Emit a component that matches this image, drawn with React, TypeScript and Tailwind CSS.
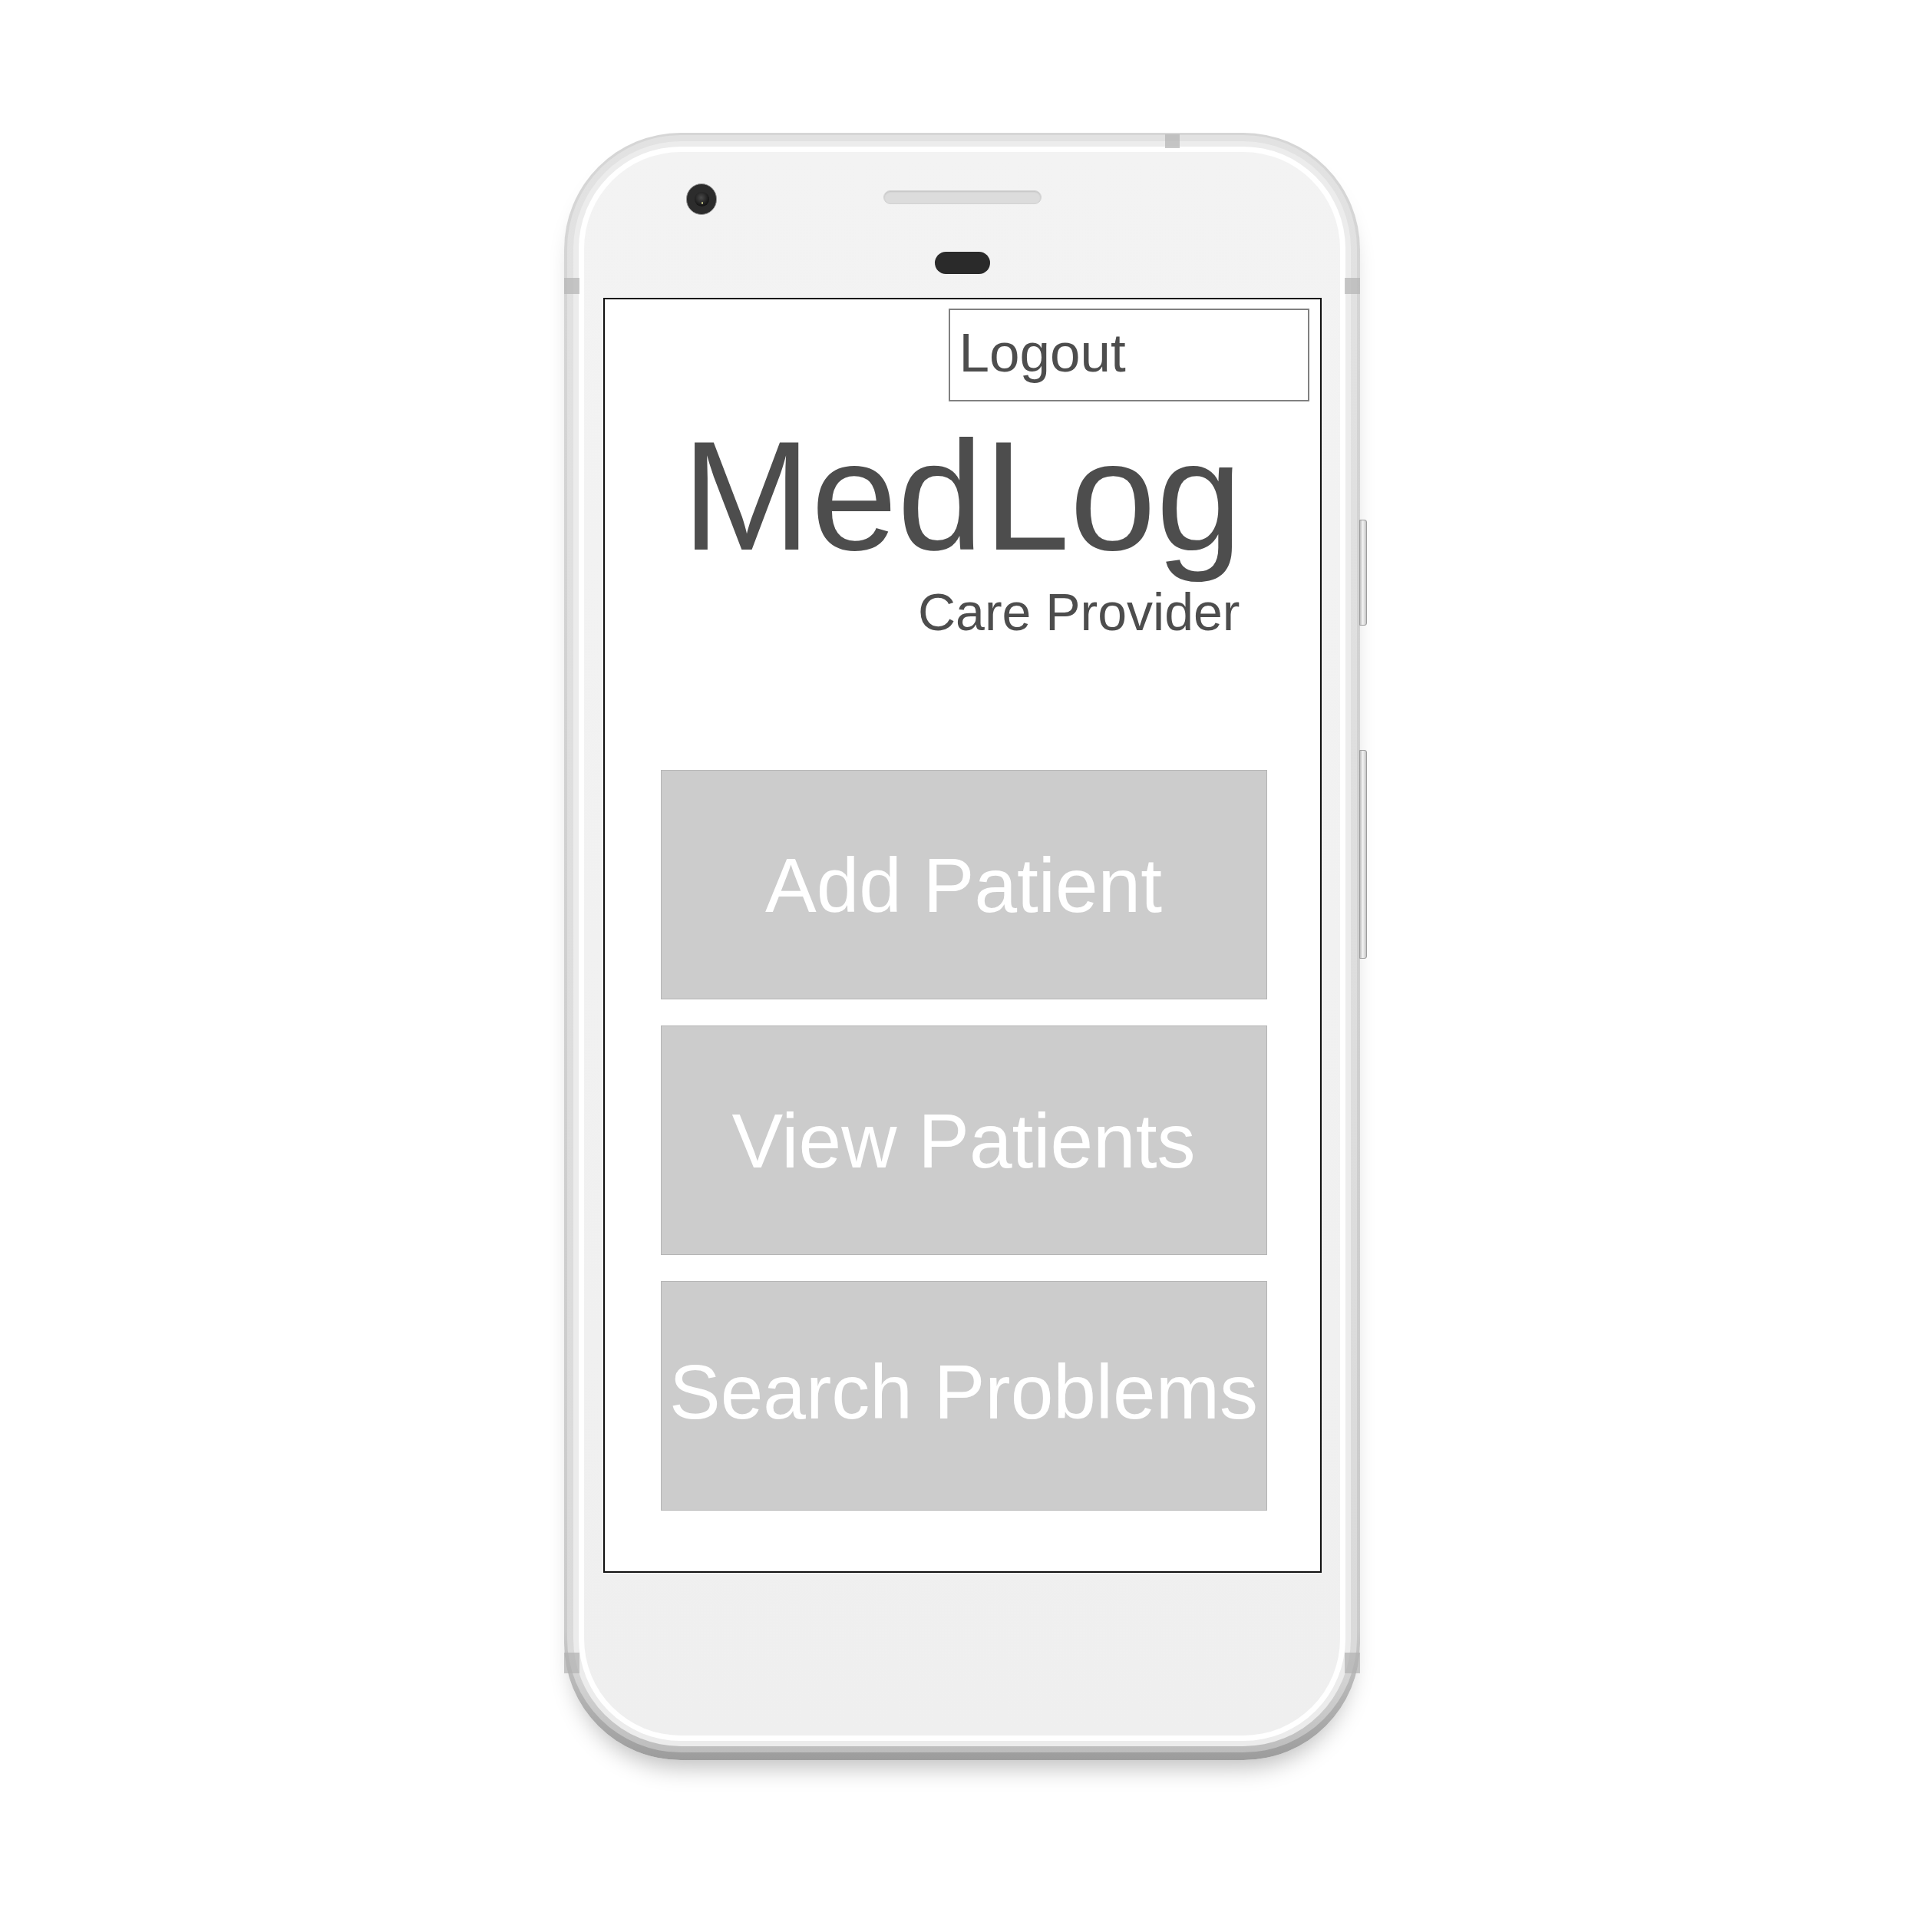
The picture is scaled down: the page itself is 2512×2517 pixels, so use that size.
import React from 'react'

const MENU_ITEMS = [
  { label: 'Add Patient', pad: 'pb-0' },
  { label: 'View Patients', pad: 'pb-0' },
  { label: 'Search Problems', pad: 'pb-[12px]' },
]

const font = { fontFamily: '"Liberation Sans", Arial, sans-serif' }

const PhoneTop = () => (
  <div className="flex h-[190px] w-full flex-col">
    <div className="mt-[41px] flex h-[41px] items-start">
      {/* front camera */}
      <div className="ml-[133px] flex h-[41px] w-[40px] items-center justify-center rounded-full border border-[#9a9a9a] bg-[#2c2c2c]">
        <div className="relative h-[19px] w-[19px] rounded-full bg-[radial-gradient(circle_at_45%_40%,#4a4a4a_0%,#141414_70%)]">
          <div className="absolute bottom-[3px] left-[9px] h-[3px] w-[2px] rounded-full bg-[#c9c98a]" />
        </div>
      </div>
      {/* speaker */}
      <div className="ml-[217px] mt-[9px] h-[18px] w-[206px] rounded-full border border-[#d2d2d2] bg-[#dcdcdc] shadow-[inset_0_1px_2px_rgba(0,0,0,0.12)]" />
    </div>
    {/* proximity sensor */}
    <div className="mt-[48px] flex justify-center">
      <div className="h-[29px] w-[72px] rounded-full bg-[#2a2a2a]" />
    </div>
  </div>
)

const Screen = () => (
  <div className="h-[1661px] w-[936px] border-2 border-[#111111] bg-white" style={font}>
    <div className="flex justify-end pr-[14px] pt-[12px]">
      <div className="h-[121px] w-[470px] border-2 border-[#808080] pl-[12px] pt-[20px]">
        <p className="text-[71px] leading-none text-[#4d4d4d]">Logout</p>
      </div>
    </div>

    <div className="mt-[22px] flex justify-center">
      <div className="flex flex-col items-end">
        <h1 className="text-[202px] leading-none text-[#4d4d4d]">MedLog</h1>
        <p className="mr-[3px] mt-[16px] text-[68px] leading-none text-[#4d4d4d]">Care Provider</p>
      </div>
    </div>

    <div className="ml-[73px] mt-[172px] flex w-[790px] flex-col gap-[34px]">
      {MENU_ITEMS.map((item) => (
        <button
          key={item.label}
          className={`flex h-[299px] w-full items-center justify-center whitespace-nowrap border border-[#b5b5b5] bg-[#cccccc] text-[100px] leading-none text-white ${item.pad}`}
          style={font}
        >
          {item.label}
        </button>
      ))}
    </div>
  </div>
)

export default function App() {
  return (
    <div className="min-h-[2517px] w-full bg-white pl-[735px] pt-[173px]">
      <div className="relative h-[2120px] w-[1037px]">
        {/* volume / power keys */}
        <div className="absolute right-[-9px] top-[504px] h-[138px] w-[10px] rounded-r-[3px] border border-[#9c9c9c] bg-[linear-gradient(to_right,#bdbdbd,#f4f4f4_45%,#c4c4c4)]" />
        <div className="absolute right-[-9px] top-[804px] h-[272px] w-[10px] rounded-r-[3px] border border-[#9c9c9c] bg-[linear-gradient(to_right,#bdbdbd,#f4f4f4_45%,#c4c4c4)]" />

        {/* frame */}
        <div className="h-full rounded-[152px] bg-[linear-gradient(to_bottom,#d6d6d6_0%,#cbcbcb_92%,#9c9c9c_100%)] px-[4px] pb-[10px] pt-[3px] shadow-[0_22px_30px_-12px_rgba(0,0,0,0.25)]">
          <div className="h-full rounded-[148px] bg-[linear-gradient(to_bottom,#e2e2e2_0%,#dadada_94%,#bdbdbd_100%)] p-[8px]">
            <div className="h-full rounded-[140px] bg-[#ececec] p-[7px]">
              <div className="h-full rounded-[133px] bg-white p-[7px]">
                <div className="flex h-full flex-col items-center rounded-[126px] bg-[linear-gradient(to_bottom,#f3f3f3,#efefef)]">
                  <PhoneTop />
                  <Screen />
                </div>
              </div>
            </div>
          </div>
        </div>

        {/* antenna lines */}
        <div className="absolute left-0 top-[189px] h-[21px] w-[20px] bg-[#b4b4b4]/70" />
        <div className="absolute right-0 top-[189px] h-[21px] w-[20px] bg-[#b4b4b4]/70" />
        <div className="absolute left-0 top-[1980px] h-[27px] w-[20px] bg-[#b0b0b0]/70" />
        <div className="absolute right-0 top-[1980px] h-[27px] w-[20px] bg-[#b0b0b0]/70" />
        <div className="absolute left-[783px] top-[2px] h-[18px] w-[19px] bg-[#b4b4b4]/70" />
      </div>
    </div>
  )
}
